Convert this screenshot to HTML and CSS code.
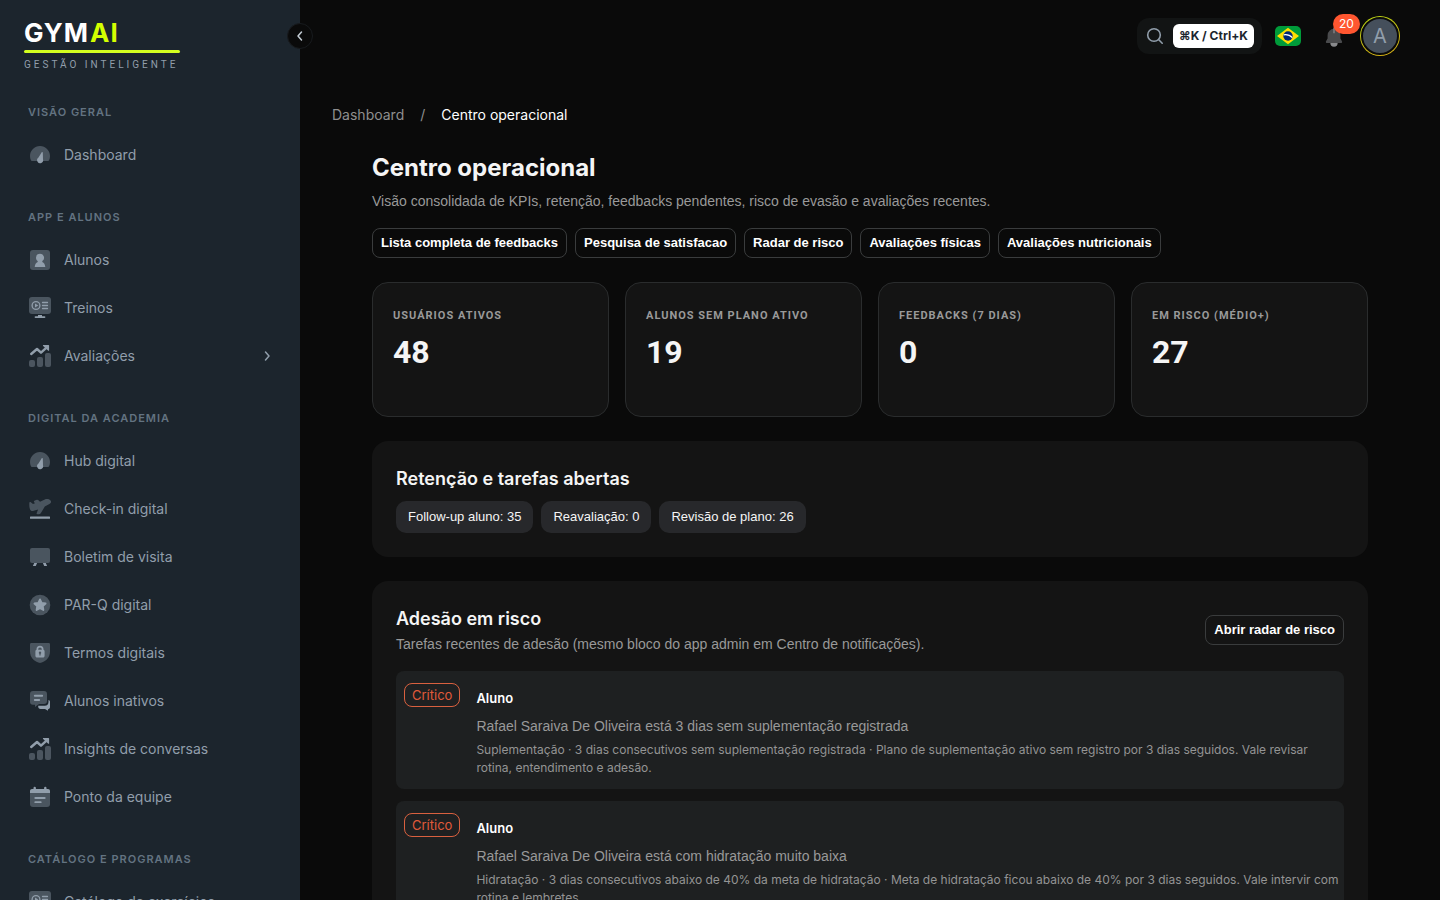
FILE: index.html
```html
<!DOCTYPE html>
<html lang="pt-BR">
<head>
<meta charset="utf-8">
<meta name="viewport" content="width=device-width, initial-scale=1">
<title>Centro operacional</title>
<link rel="stylesheet" href="styles.css">
</head>
<body>
<svg class="sprite" aria-hidden="true">
  <symbol id="gauge" viewBox="0 0 24 24"><path opacity=".4" d="M12 3C6.500 3 2 7.500 2 13c0 1.500.3 3 .9 4.300.2.500.6.700 1.100.700h16c.5 0 .9-.2 1.100-.7.6-1.300.9-2.800.9-4.300 0-5.500-4.500-10-10-10z"/><path d="M13.600 9.400c.1-.6 1.200-.6 1.200.2l.2 6.700a3 3 0 1 1-4.700-1.500z"/></symbol>
  <symbol id="user" viewBox="0 0 24 24"><rect opacity=".4" x="2" y="2" width="20" height="20" rx="3"/><path d="M12 5.800a4 4 0 0 0-4 4c0 1.400.7 2.600 1.700 3.300v1C7.900 14.800 7 16.500 6.700 19h10.600c-.3-2.500-1.200-4.200-3-4.900v-1A4 4 0 0 0 12 5.800z"/></symbol>
  <symbol id="screen" viewBox="0 0 24 24"><rect opacity=".4" x="1" y="1" width="22" height="17" rx="3"/><g fill="none" stroke="currentColor" stroke-width="1.300" stroke-linecap="round"><circle cx="8" cy="9.500" r="3.900"/><path d="M14.500 6.500h5M14.500 9.500h5M14.500 12.500h5"/></g><path d="M7 7.500v4l3.300-2zM10 19h4v1.200h2.500a.9.900 0 0 1 0 1.800h-9a.9.900 0 0 1 0-1.800H10z"/></symbol>
  <symbol id="chart" viewBox="0 0 24 24"><g opacity=".4"><rect x="1" y="16" width="6" height="7" rx="2"/><rect x="9" y="13" width="6" height="10" rx="2"/><rect x="17" y="9" width="6" height="14" rx="2"/></g><path fill="none" stroke="currentColor" stroke-width="2.400" stroke-linecap="round" stroke-linejoin="round" d="M3.200 10L9 5l4 3.700 5.500-5"/><path d="M15.500 1h5c.4 0 .6.200.6.600v4.800c0 .5-.5.600-.8.300l-5.200-4.800c-.4-.4-.2-.9.400-.9z"/></symbol>
  <symbol id="plane" viewBox="0 0 24 24"><path opacity=".4" d="M1.300 6.200c0-1 .8-1.400 1.500-.9L5 6.900l2-.6-.8-1c-.6-.9-.3-1.500.6-1.800l2-.7c.7-.2 1.200 0 1.700.4L12 4.700l4.800-2.200c2.200-1 4.900-.4 5.900 1.200.8 1.200.2 2.600-1.300 3.400l-4.600 2.500-3.900 6.500c-.5.800-1.200 1.200-2.100 1.200H9.500c-.8 0-1.100-.6-.8-1.300l1.400-3.600-4.400 1.400c-1.600.5-2.900 0-3.600-1.400-.8-1.700-.8-4-.8-6.200z"/><rect x="2" y="19.500" width="20" height="2.200" rx=".5"/></symbol>
  <symbol id="board" viewBox="0 0 24 24"><rect opacity=".4" x="2" y="3" width="20" height="15" rx="2"/><path d="M6.200 18h2.900l-1.300 3H4.900zM14.900 18h2.900l1.300 3h-2.900z"/></symbol>
  <symbol id="star" viewBox="0 0 24 24"><circle opacity=".4" cx="12" cy="12" r="10.300"/><path stroke="currentColor" stroke-width="1.800" stroke-linejoin="round" d="M12 6.400l1.700 3.500 3.900.6-2.800 2.700.6 3.800-3.400-1.800L8.600 17l.6-3.800-2.800-2.700 3.900-.6z"/></symbol>
  <symbol id="shield" viewBox="0 0 24 24"><path opacity=".4" d="M2 3.500C2 2.500 2.500 2 3.500 2h17c1 0 1.500.5 1.500 1.500v7c0 5.500-3.500 9.500-9 11.300-.7.200-1.300.2-2 0C5.500 20 2 16 2 10.500z"/><path fill-rule="evenodd" d="M8.500 8.800V8.300a3.500 3.500 0 0 1 7 0v.5c.7.200 1.100.7 1.100 1.400v4.600c0 1.200-.7 1.800-1.800 1.800H9.200c-1.100 0-1.800-.6-1.800-1.800v-4.600c0-.7.4-1.200 1.100-1.400zm1.700-.1h3.600v-.4a1.800 1.800 0 0 0-3.600 0zM12 10.500a1.300 1.300 0 0 0-.6 2.400v1.600h1.200v-1.600a1.300 1.300 0 0 0-.6-2.400z"/></symbol>
  <symbol id="chat" viewBox="0 0 24 24"><path opacity=".4" d="M5 2h11c2 0 3 1 3 3v7c0 2-1 3-3 3h-5l-4 3v-2.300H5c-2 0-3-1-3-3V5c0-2 1-3 3-3z"/><path d="M20.500 11c1 .3 1.500 1 1.500 2v5c0 1.300-.8 2.200-2 2.200v1.500l-3-1.700h-4.500c-1.500 0-2.300-1-2.300-2.200v-1h6.500c2.500 0 3.800-1.500 3.800-3.800zM6.800 5.800h7.400a.9.900 0 0 1 0 1.900H6.800a.9.900 0 0 1 0-1.900zM6.800 10h4.400a.9.900 0 0 1 0 1.900H6.800a.9.900 0 0 1 0-1.900z"/></symbol>
  <symbol id="calendar" viewBox="0 0 24 24"><path opacity=".4" d="M2 8h20v11c0 2-1 3-3 3H5c-2 0-3-1-3-3z"/><path d="M2 8V6c0-1.300.8-2 2-2h1.500V3a1.200 1.200 0 0 1 2.400 0v1h8.200V3a1.200 1.200 0 0 1 2.400 0v1H20c1.200 0 2 .7 2 2v2zM7.300 12h9.400a.9.900 0 0 1 0 1.900H7.300a.9.900 0 0 1 0-1.900zM7.300 16.200h5.400a.9.900 0 0 1 0 1.900H7.300a.9.900 0 0 1 0-1.900z"/></symbol>
</svg>
<div class="layout">
  <aside class="sidebar">
    <a class="brand" href="#">
      <span class="brand-name">GYM<span class="brand-accent">AI</span></span>
      <span class="brand-line"></span>
      <span class="brand-tag">GESTÃO INTELIGENTE</span>
    </a>
    <nav class="nav" aria-label="Principal">
      <h2 class="nav-title">VISÃO GERAL</h2>
      <a class="nav-item" href="#"><svg class="icon"><use href="#gauge"/></svg>Dashboard</a>
      <h2 class="nav-title">APP E ALUNOS</h2>
      <a class="nav-item" href="#"><svg class="icon"><use href="#user"/></svg>Alunos</a>
      <a class="nav-item" href="#"><svg class="icon"><use href="#screen"/></svg>Treinos</a>
      <a class="nav-item" href="#"><svg class="icon"><use href="#chart"/></svg>Avaliações<svg class="chevron" viewBox="0 0 16 16"><path d="M6.500 4l3.500 4-3.500 4"/></svg></a>
      <h2 class="nav-title">DIGITAL DA ACADEMIA</h2>
      <a class="nav-item" href="#"><svg class="icon"><use href="#gauge"/></svg>Hub digital</a>
      <a class="nav-item" href="#"><svg class="icon"><use href="#plane"/></svg>Check-in digital</a>
      <a class="nav-item" href="#"><svg class="icon"><use href="#board"/></svg>Boletim de visita</a>
      <a class="nav-item" href="#"><svg class="icon"><use href="#star"/></svg>PAR-Q digital</a>
      <a class="nav-item" href="#"><svg class="icon"><use href="#shield"/></svg>Termos digitais</a>
      <a class="nav-item" href="#"><svg class="icon"><use href="#chat"/></svg>Alunos inativos</a>
      <a class="nav-item" href="#"><svg class="icon"><use href="#chart"/></svg>Insights de conversas</a>
      <a class="nav-item" href="#"><svg class="icon"><use href="#calendar"/></svg>Ponto da equipe</a>
      <h2 class="nav-title">CATÁLOGO E PROGRAMAS</h2>
      <a class="nav-item" href="#"><svg class="icon"><use href="#screen"/></svg>Catálogo de exercícios</a>
    </nav>
  </aside>
  <button class="collapse" type="button" aria-label="Recolher menu"><svg class="chevron" viewBox="0 0 16 16"><path d="M9.500 4L6 8l3.500 4"/></svg></button>
  <div class="page">
    <header class="topbar">
      <button class="search" type="button" aria-label="Buscar">
        <svg class="search-icon" viewBox="0 0 20 20"><circle cx="9" cy="9" r="6.300"/><path d="M13.800 13.800l3.400 3.400"/></svg>
        <kbd class="shortcut">⌘K / Ctrl+K</kbd>
      </button>
      <button class="flag" type="button" aria-label="Português">
        <svg viewBox="0 0 26 20"><rect width="26" height="20" fill="#009b3a"/><path fill="#fedf00" d="M13 1.800L24 10l-11 8.200L2 10z"/><circle cx="13" cy="10" r="4.700" fill="#002776"/><path d="M8.700 8.800c3-.5 6.400.4 8.600 2.800" fill="none" stroke="#fff" stroke-width="1.200"/></svg>
      </button>
      <button class="bell" type="button" aria-label="Notificações">
        <svg viewBox="0 0 24 24"><path fill="#4a4b4d" d="M12 3a7 7 0 0 0-7 7v3.500l-1.700 3c-.5 1 0 2 1.200 2h15c1.200 0 1.700-1 1.200-2l-1.700-3V10a7 7 0 0 0-7-7z"/><path fill="#88898c" d="M8 18.500h8a4 4 0 0 1-8 0zM11.300 2h1.400v6h-1.400z"/></svg>
        <span class="count">20</span>
      </button>
      <button class="avatar" type="button" aria-label="Conta"><span class="avatar-face">A</span></button>
    </header>
    <nav class="crumbs" aria-label="Trilha"><a class="crumb" href="#">Dashboard</a><span class="crumb">/</span><span class="crumb-current">Centro operacional</span></nav>
    <main class="content">
      <section class="intro">
        <h1 class="title">Centro operacional</h1>
        <p class="lead">Visão consolidada de KPIs, retenção, feedbacks pendentes, risco de evasão e avaliações recentes.</p>
        <div class="row">
          <a class="button" href="#">Lista completa de feedbacks</a>
          <a class="button" href="#">Pesquisa de satisfacao</a>
          <a class="button" href="#">Radar de risco</a>
          <a class="button" href="#">Avaliações físicas</a>
          <a class="button" href="#">Avaliações nutricionais</a>
        </div>
      </section>
      <section class="stats">
        <article class="stat"><h2 class="stat-label">USUÁRIOS ATIVOS</h2><p class="stat-value">48</p></article>
        <article class="stat"><h2 class="stat-label">ALUNOS SEM PLANO ATIVO</h2><p class="stat-value">19</p></article>
        <article class="stat"><h2 class="stat-label">FEEDBACKS (7 DIAS)</h2><p class="stat-value">0</p></article>
        <article class="stat"><h2 class="stat-label">EM RISCO (MÉDIO+)</h2><p class="stat-value">27</p></article>
      </section>
      <section class="panel">
        <h2 class="panel-title">Retenção e tarefas abertas</h2>
        <div class="row chips"><span class="chip">Follow-up aluno: 35</span><span class="chip">Reavaliação: 0</span><span class="chip">Revisão de plano: 26</span></div>
      </section>
      <section class="panel">
        <div class="panel-head">
          <div><h2 class="panel-title">Adesão em risco</h2><p class="panel-sub">Tarefas recentes de adesão (mesmo bloco do app admin em Centro de notificações).</p></div>
          <a class="button" href="#">Abrir radar de risco</a>
        </div>
        <div class="tasks">
          <article class="task">
            <span class="severity">Crítico</span>
            <div class="task-body"><h3 class="task-name">Aluno</h3><p class="task-text">Rafael Saraiva De Oliveira está 3 dias sem suplementação registrada</p><p class="task-note">Suplementação · 3 dias consecutivos sem suplementação registrada · Plano de suplementação ativo sem registro por 3 dias seguidos. Vale revisar rotina, entendimento e adesão.</p></div>
          </article>
          <article class="task">
            <span class="severity">Crítico</span>
            <div class="task-body"><h3 class="task-name">Aluno</h3><p class="task-text">Rafael Saraiva De Oliveira está com hidratação muito baixa</p><p class="task-note">Hidratação · 3 dias consecutivos abaixo de 40% da meta de hidratação · Meta de hidratação ficou abaixo de 40% por 3 dias seguidos. Vale intervir com rotina e lembretes.</p></div>
          </article>
        </div>
      </section>
    </main>
  </div>
</div>
</body>
</html>
```

FILE: styles.css
```css
* { box-sizing: border-box; }
body { margin: 0; background: #0a0a0a; color: #fff; font: 14px/22px "Inter", "Liberation Sans", sans-serif; }
h1, h2, h3, p { margin: 0; }
a { color: inherit; text-decoration: none; }
button { padding: 0; border: 0; background: none; color: inherit; font: inherit; cursor: pointer; }
.sprite { position: absolute; width: 0; height: 0; }

.layout { position: relative; display: grid; grid-template-columns: 300px minmax(0, 1fr); height: 100vh; overflow: hidden; }
.sidebar { background: #1c252d; overflow: hidden; }
.brand { display: flex; flex-direction: column; width: 156px; margin: 18px 0 0 24px; }
.brand-name { font-size: 26px; line-height: 30px; font-weight: 700; letter-spacing: 1px; }
.brand-accent { margin-left: 1px; color: #d4ff00; }
.brand-line { height: 3px; margin: 2px 0 5px; border-radius: 2px; background: #d4ff1f; }
.brand-tag { font: 10px/14px Roboto, sans-serif; letter-spacing: 3px; color: #919eab; white-space: nowrap; }
.nav { display: flex; flex-direction: column; gap: 4px; padding: 4px 16px 0; }
.nav-title { margin: 27px 12px 8px; font-size: 11px; line-height: 18px; font-weight: 600; letter-spacing: 1px; color: #637381; }
.nav-item { display: flex; flex: none; align-items: center; gap: 12px; height: 44px; padding: 0 12px; color: #919eab; }
.icon { width: 24px; height: 24px; fill: currentColor; }
.chevron { width: 16px; height: 16px; fill: none; stroke: currentColor; stroke-width: 1.500; stroke-linecap: round; stroke-linejoin: round; }
.nav-item .chevron { margin-left: auto; margin-right: -3px; }
.collapse { position: absolute; top: 23px; left: 287px; display: grid; place-items: center; width: 26px; height: 26px; border: 1px solid #181b1e; border-radius: 50%; background: #0a0a0a; color: #c4cdd5; }

.topbar { display: flex; align-items: center; justify-content: flex-end; height: 72px; padding-right: 40px; }
.search { display: flex; align-items: center; gap: 8px; height: 36px; padding: 0 8px; border-radius: 12px; background: #121414; }
.search-icon { width: 20px; height: 20px; fill: none; stroke: #919eab; stroke-width: 1.600; stroke-linecap: round; }
.shortcut { padding: 0 6px; border-radius: 6px; background: #fff; color: #1c252e; font: 700 12px/24px "Inter", "DejaVu Sans", sans-serif; }
.flag { width: 26px; height: 20px; margin: 0 20px 0 13px; border-radius: 5px; overflow: hidden; }
.flag svg { display: block; width: 100%; }
.bell { position: relative; width: 26px; height: 24px; margin-right: 13px; }
.bell svg { display: block; width: 22px; height: 22px; margin: 1px 0 0 2px; }
.count { position: absolute; top: -10px; left: 12px; min-width: 26px; padding: 0 6px; border-radius: 10px; background: #ff5630; color: #fff; font-size: 12px; line-height: 20px; }
.avatar { width: 40px; height: 40px; padding: 1px; border-radius: 50%; background: linear-gradient(160deg, #b9d813, #d5a915); }
.avatar-face { display: block; border: 2px solid #0a0a0a; border-radius: 50%; background: #454f5b; color: #919eab; font-size: 20px; line-height: 34px; }

.page { min-width: 0; }
.crumbs { display: flex; gap: 16px; margin: 32px 32px 0; }
.crumb { color: #8f8f8f; }
.content { display: flex; flex-direction: column; gap: 24px; padding: 24px 72px; }
.title { font-size: 24px; line-height: 36px; font-weight: 700; color: #f5f5f5; }
.lead { margin: 4px 0 16px; color: #999; font-family: "Liberation Sans", sans-serif; }
.row { display: flex; flex-wrap: wrap; gap: 8px; }
.button { flex: none; padding: 0 8px; border: 1px solid #3a3c3d; border-radius: 8px; font: 700 13px/28px "Liberation Sans", sans-serif; }
.stats { display: grid; grid-template-columns: repeat(4, minmax(0, 1fr)); gap: 16px; }
.stat { min-height: 135px; padding: 24px 20px; border: 1px solid #2a2c2d; border-radius: 16px; background: #141414; }
.stat-label { font: 700 11px/18px Roboto, sans-serif; letter-spacing: 1px; color: #999; white-space: nowrap; }
.stat-value { margin-top: 8px; font: 700 32px/38px Roboto, sans-serif; color: #f5f5f5; }
.panel { padding: 24px; border-radius: 16px; background: #141414; }
.panel-title { font-size: 18px; line-height: 28px; font-weight: 600; color: #f5f5f5; }
.chips { margin-top: 8px; }
.chip { padding: 0 12px; border-radius: 10px; background: #27282b; color: #f5f5f5; font: 13px/32px "Liberation Sans", sans-serif; }
.panel-head { display: flex; align-items: center; justify-content: space-between; gap: 16px; }
.panel-sub { color: #999; font-family: "Liberation Sans", sans-serif; }
.tasks { display: flex; flex-direction: column; gap: 12px; margin-top: 16px; }
.task { display: flex; align-items: flex-start; gap: 16px; padding: 12px 4px 12px 8px; border-radius: 8px; background: #1e2021; }
.severity { flex: none; padding: 0 7px; border: 1px solid #d9603f; border-radius: 8px; color: #e05a3a; font-size: 13px; line-height: 22px; }
.task-body { padding-top: 4px; }
.task-name { font-size: 13px; line-height: 22px; font-weight: 600; }
.task-text { margin: 6px 0 4px; color: #999; font-family: "Liberation Sans", sans-serif; }
.task-note { color: #949494; font-size: 12px; line-height: 18px; }
```
